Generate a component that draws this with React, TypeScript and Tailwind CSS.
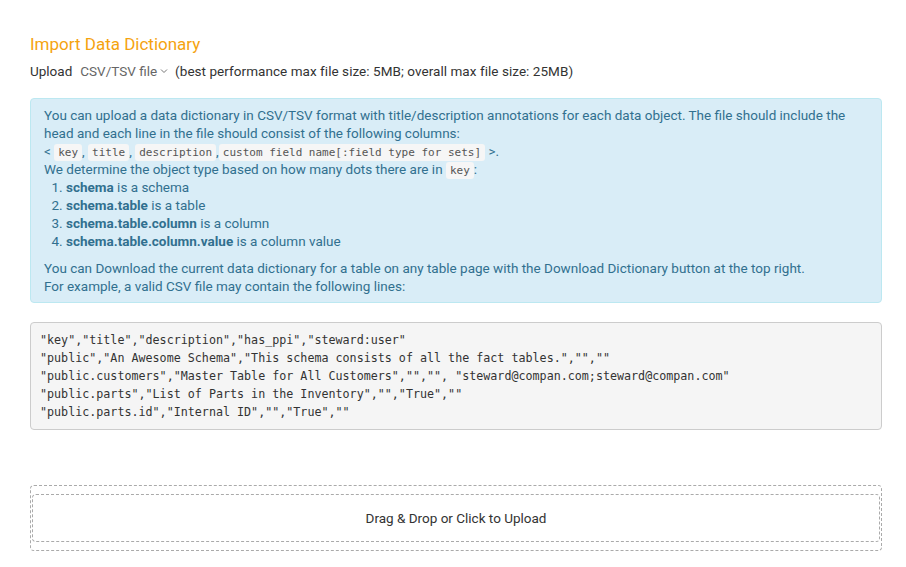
import React from "react";

const body = { fontFamily: "Roboto, 'Liberation Sans', sans-serif" };
const mono = { fontFamily: "'DejaVu Sans Mono', 'Liberation Mono', monospace" };

function Code({ children }: { children: React.ReactNode }) {
  return (
    <code
      style={mono}
      className="rounded-[3px] bg-[#f6f6f6] px-[4px] py-[2px] text-[11px] leading-[12px] text-[#555]"
    >
      {children}
    </code>
  );
}

export default function App() {
  const lines = [
    '"key","title","description","has_ppi","steward:user"',
    '"public","An Awesome Schema","This schema consists of all the fact tables.","",""',
    '"public.customers","Master Table for All Customers","","", "steward@compan.com;steward@compan.com"',
    '"public.parts","List of Parts in the Inventory","","True",""',
    '"public.parts.id","Internal ID","","True",""',
  ];
  return (
    <div style={body} className="min-h-[567px] w-[906px] bg-white pl-[30px] pr-[24px] pt-[34px] text-[13.5px] text-[#333]">
      <h1 className="text-[17px] leading-[20px] text-[#f5a30f]">Import Data Dictionary</h1>
      <div className="mt-[8px] flex items-center leading-[18px]">
        <span>Upload</span>
        <span className="ml-[8px] flex items-center text-[#666]">
          CSV/TSV file
          <svg width="8" height="6" viewBox="0 0 8 6" className="ml-[3px]">
            <path d="M1 1.5 L4 4.5 L7 1.5" fill="none" stroke="#777" strokeWidth="1" />
          </svg>
        </span>
        <span className="ml-[7px] tracking-[0.05px]">(best performance max file size: 5MB; overall max file size: 25MB)</span>
      </div>

      <div className="mt-[18px] rounded-[4px] border border-[#bce8f1] bg-[#d9edf7] px-[13px] pb-[7px] pt-[7px] leading-[18px] text-[#31708f]">
        <div>
          You can upload a data dictionary in CSV/TSV format with title/description annotations for each data object. The file should include the head and each line in the file should consist of the following columns:
        </div>
        <div>
          &lt; <Code>key</Code>, <Code>title</Code>, <Code>description</Code>,<Code>custom field name[:field type for sets]</Code> &gt;.
        </div>
        <div>
          We determine the object type based on how many dots there are in <Code>key</Code>:
        </div>
        <ol className="list-decimal pl-[22px]">
          <li><b>schema</b> is a schema</li>
          <li><b>schema.table</b> is a table</li>
          <li><b>schema.table.column</b> is a column</li>
          <li><b>schema.table.column.value</b> is a column value</li>
        </ol>
        <div className="mt-[9px]">
          You can Download the current data dictionary for a table on any table page with the Download Dictionary button at the top right.
        </div>
        <div>For example, a valid CSV file may contain the following lines:</div>
      </div>

      <pre
        style={mono}
        className="mt-[19px] rounded-[4px] border border-[#ccc] bg-[#f5f5f5] px-[9px] py-[8px] text-[11.7px] leading-[18px] text-[#333]"
      >
        {lines.join("\n")}
      </pre>

      <div className="mt-[55px] rounded-[4px] border border-dashed border-[#aaa] px-[1px] py-[8px]">
        <div className="flex h-[48px] items-center justify-center rounded-[4px] border border-dashed border-[#aaa] pt-[1px] text-[13.5px] text-[#333]">
          Drag &amp; Drop or Click to Upload
        </div>
      </div>
    </div>
  );
}
